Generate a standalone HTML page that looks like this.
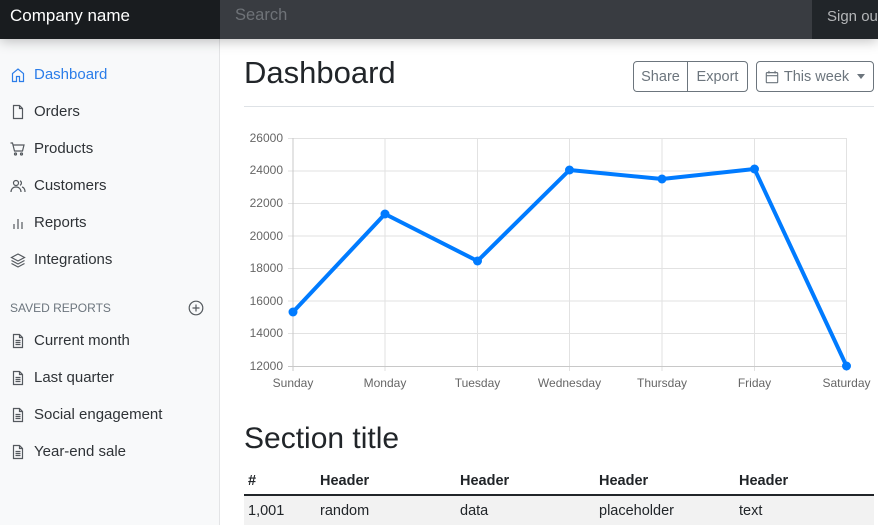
<!DOCTYPE html>
<html><head><meta charset="utf-8"><style>
*{box-sizing:border-box;margin:0;padding:0}
body{width:878px;height:525px;overflow:hidden;font-family:"Liberation Sans",sans-serif;background:#fff;color:#212529;position:relative}
.nav{position:absolute;left:0;top:0;width:878px;height:39px;background:#212529;box-shadow:0 2px 12px rgba(0,0,0,.25);z-index:2}
.brand{position:absolute;left:0;top:0;width:220px;height:39px;background:#191c1f;color:#fff;font-size:17px;padding:6px 10px}
.search{position:absolute;left:220px;top:0;width:592px;height:39px;background:#393c41;color:#6f7378;font-size:16.5px;padding:6px 15px}
.sign{position:absolute;left:827px;top:8px;color:#b4b6b8;font-size:15px;white-space:nowrap}
.side{position:absolute;left:0;top:39px;width:220px;height:486px;background:#f8f9fa;border-right:1px solid #e3e4e6}
.it{position:absolute;left:10px;font-size:15px;color:#2f3337;display:flex;align-items:center;margin-top:1px}
.it svg{width:16px;height:16px;margin-right:8px;fill:none;stroke:#54595e;stroke-width:1.2}
.it.act{color:#2b7de9}.it.act svg{stroke:#2b7de9}
.saved{position:absolute;left:10px;top:262px;font-size:12px;color:#6c757d}
.h1{position:absolute;left:244px;top:55px;font-size:31px;color:#212529}
.hr{position:absolute;left:244px;top:106px;width:630px;height:1px;background:#dee2e6}
.btn{position:absolute;top:61px;height:31px;border:1px solid #6c757d;color:#6c757d;font-size:14.5px;display:flex;align-items:center;justify-content:center}
.h2{position:absolute;left:244px;top:422px;font-size:30px}
.th{position:absolute;top:473px;font-size:14.5px;font-weight:bold}
.td{position:absolute;top:503px;font-size:14.5px}
</style></head><body>
<div class="nav"><div class="brand">Company name</div><div class="search">Search</div><div class="sign">Sign out</div></div>
<div class="side">
<div class="it act" style="top:26px"><svg viewBox="0 0 16 16"><path d="M2.5 14.5V6.5L8 2l5.5 4.5v8h-4v-5h-3v5z"/></svg>Dashboard</div>
<div class="it" style="top:63px"><svg viewBox="0 0 16 16"><path d="M3.5 1.5h6l3 3v10h-9z M9.5 1.5v3h3"/></svg>Orders</div>
<div class="it" style="top:100px"><svg viewBox="0 0 16 16"><path d="M.5 2h2l2 8h8l1.5-6H3.5"/><circle cx="5.5" cy="13" r="1"/><circle cx="11.5" cy="13" r="1"/></svg>Products</div>
<div class="it" style="top:137px"><svg viewBox="0 0 16 16"><circle cx="6" cy="5" r="2.5"/><path d="M1 14c0-3 2-5 5-5s5 2 5 5M10 2.8a2.5 2.5 0 010 4.5M12 9c2 .5 3 2.5 3 5"/></svg>Customers</div>
<div class="it" style="top:174px"><svg viewBox="0 0 16 16"><path d="M4 14V9M8 14V4M12 14V7"/></svg>Reports</div>
<div class="it" style="top:211px"><svg viewBox="0 0 16 16"><path d="M8 2l6.5 3.5L8 9 1.5 5.5z M1.5 8.5L8 12l6.5-3.5 M1.5 11.5L8 15l6.5-3.5"/></svg>Integrations</div>
<div class="saved">SAVED REPORTS</div>
<svg style="position:absolute;left:188px;top:261px" width="16" height="16" viewBox="0 0 16 16" fill="none" stroke="#54595e" stroke-width="1.2"><circle cx="8" cy="8" r="6.8"/><path d="M8 4.5v7M4.5 8h7"/></svg>
<div class="it" style="top:292px"><svg viewBox="0 0 16 16"><path d="M3.5 1.5h6l3 3v10h-9z M9.5 1.5v3h3 M5.5 7.5h5M5.5 9.5h5M5.5 11.5h5"/></svg>Current month</div>
<div class="it" style="top:329px"><svg viewBox="0 0 16 16"><path d="M3.5 1.5h6l3 3v10h-9z M9.5 1.5v3h3 M5.5 7.5h5M5.5 9.5h5M5.5 11.5h5"/></svg>Last quarter</div>
<div class="it" style="top:366px"><svg viewBox="0 0 16 16"><path d="M3.5 1.5h6l3 3v10h-9z M9.5 1.5v3h3 M5.5 7.5h5M5.5 9.5h5M5.5 11.5h5"/></svg>Social engagement</div>
<div class="it" style="top:403px"><svg viewBox="0 0 16 16"><path d="M3.5 1.5h6l3 3v10h-9z M9.5 1.5v3h3 M5.5 7.5h5M5.5 9.5h5M5.5 11.5h5"/></svg>Year-end sale</div>
</div>
<div class="h1">Dashboard</div>
<div class="btn" style="left:633px;width:55px;border-radius:4px 0 0 4px">Share</div>
<div class="btn" style="left:687px;width:61px;border-radius:0 4px 4px 0">Export</div>
<div class="btn" style="left:756px;width:118px;border-radius:4px"><svg width="14" height="14" viewBox="0 0 16 16" fill="none" stroke="#6c757d" stroke-width="1.3" style="margin-right:5px"><rect x="1.5" y="3" width="13" height="11.5" rx="1"/><path d="M1.5 6.5h13M4.5 1v3M11.5 1v3"/></svg>This week<span style="margin-left:8px;border-top:5px solid #6c757d;border-left:4px solid transparent;border-right:4px solid transparent;display:inline-block"></span></div>
<div class="hr"></div>
<svg style="position:absolute;left:0;top:0" width="878" height="525" font-family="Liberation Sans,sans-serif" font-size="12" fill="#666">
<g stroke="#e2e2e2" stroke-width="1">
<path d="M288 138.5H847M288 171H847M288 203.5H847M288 236H847M288 268.5H847M288 301H847M288 333.5H847"/>
<path d="M385 138V371M477.5 138V371M569.5 138V371M662 138V371M754.5 138V371M846.5 138V371"/>
</g>
<path d="M293 138V371M288 366.5H847" stroke="#c8c8c8"/>
<g text-anchor="end"><text x="283" y="142">26000</text><text x="283" y="174">24000</text><text x="283" y="207">22000</text><text x="283" y="240">20000</text><text x="283" y="272">18000</text><text x="283" y="305">16000</text><text x="283" y="337">14000</text><text x="283" y="370">12000</text></g>
<g text-anchor="middle"><text x="293" y="387">Sunday</text><text x="385" y="387">Monday</text><text x="477.5" y="387">Tuesday</text><text x="569.5" y="387">Wednesday</text><text x="662" y="387">Thursday</text><text x="754.5" y="387">Friday</text><text x="846.5" y="387">Saturday</text></g>
<polyline points="293,312 385,214 477.5,261 569.5,170 662,179 754.5,169 846.5,366" fill="none" stroke="#007bff" stroke-width="4" stroke-linejoin="round"/>
<g fill="#007bff"><circle cx="293" cy="312" r="4.5"/><circle cx="385" cy="214" r="4.5"/><circle cx="477.5" cy="261" r="4.5"/><circle cx="569.5" cy="170" r="4.5"/><circle cx="662" cy="179" r="4.5"/><circle cx="754.5" cy="169" r="4.5"/><circle cx="846.5" cy="366" r="4.5"/></g>
</svg>
<div class="h2">Section title</div>
<div style="position:absolute;left:244px;top:494px;width:630px;height:2px;background:#212529"></div>
<div style="position:absolute;left:244px;top:496px;width:630px;height:29px;background:#f2f2f2"></div>
<div class="th" style="left:248px">#</div><div class="th" style="left:320px">Header</div><div class="th" style="left:460px">Header</div><div class="th" style="left:599px">Header</div><div class="th" style="left:739px">Header</div>
<div class="td" style="left:248px">1,001</div><div class="td" style="left:320px">random</div><div class="td" style="left:460px">data</div><div class="td" style="left:599px">placeholder</div><div class="td" style="left:739px">text</div>
</body></html>
